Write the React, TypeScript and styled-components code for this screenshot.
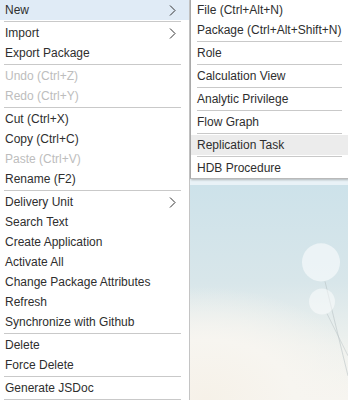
import React from 'react';
import styled, { createGlobalStyle } from 'styled-components';

const GlobalStyle = createGlobalStyle`
  html, body {
    margin: 0;
    padding: 0;
    width: 348px;
    height: 400px;
    overflow: hidden;
    background: #ffffff;
  }
  #root {
    height: 100%;
  }
`;

const Screen = styled.div`
    height: 400px;
    width: 348px;
    display: flex;
    font-family: "Liberation Sans", Arial, sans-serif;
    font-size: 12px;
    color: #2e2e2e;
    overflow: hidden;
`;

const Menu = styled.div`
    width: 189px;
    flex: none;
    background: #ffffff;
    border-right: 1px solid #c4c4c4;
    display: flex;
    flex-direction: column;
`;

const Item = styled.div<{ $disabled?: boolean; $active?: boolean; $hover?: boolean }>`
    height: 20px;
    line-height: 20px;
    padding: 0 5px;
    display: flex;
    align-items: center;
    justify-content: space-between;
    white-space: nowrap;
    color: ${p => (p.$disabled ? '#bdbdbd' : '#2e2e2e')};
    background: ${p => (p.$active ? '#e0ebf6' : p.$hover ? '#ececec' : 'transparent')};
`;

const Separator = styled.div<{ $left?: number; $right?: number }>`
    height: 1px;
    margin: 1px ${p => p.$right ?? 8}px 1px ${p => p.$left ?? 4}px;
    background: #c9c9c9;
    flex: none;
`;

const Arrow = styled.svg`
    width: 7px;
    height: 11px;
    margin-right: 8px;
    flex: none;
`;

const RightSide = styled.div`
    flex: 1;
    display: flex;
    flex-direction: column;
    min-width: 0;
`;

const SubMenu = styled.div`
    background: #ffffff;
    border-left: 1px solid #a9a9a9;
    border-bottom: 1px solid #b9b9b9;
    box-shadow: 1px 1px 2px rgba(0, 0, 0, 0.25);
    display: flex;
    flex-direction: column;
    position: relative;
    z-index: 1;
`;

const SubItem = styled(Item)`
    padding: 0 6px;
`;

const HeaderStrip = styled.div`
    height: 6px;
    background: #e9f2f7;
    flex: none;
`;

const Scene = styled.div`
    flex: 1;
    position: relative;
    background: radial-gradient(ellipse 140% 70% at 10% 100%, #f6f1e8 0%, #f7f5f0 40%, rgba(247, 245, 240, 0) 75%),
        linear-gradient(180deg, #cde2ea 0%, #d8e6ea 45%, #eef1ee 75%, #f7f5f0 100%);
    overflow: hidden;
`;

const SceneArt = styled.svg`
    width: 100%;
    height: 100%;
    display: block;
`;

type Entry = { label: string; disabled?: boolean; sub?: boolean; active?: boolean } | 'sep';

const mainItems: Entry[] = [
    { label: 'New', sub: true, active: true },
    'sep',
    { label: 'Import', sub: true },
    { label: 'Export Package' },
    'sep',
    { label: 'Undo (Ctrl+Z)', disabled: true },
    { label: 'Redo (Ctrl+Y)', disabled: true },
    'sep',
    { label: 'Cut (Ctrl+X)' },
    { label: 'Copy (Ctrl+C)' },
    { label: 'Paste (Ctrl+V)', disabled: true },
    { label: 'Rename (F2)' },
    'sep',
    { label: 'Delivery Unit', sub: true },
    { label: 'Search Text' },
    { label: 'Create Application' },
    { label: 'Activate All' },
    { label: 'Change Package Attributes' },
    { label: 'Refresh' },
    { label: 'Synchronize with Github' },
    'sep',
    { label: 'Delete' },
    { label: 'Force Delete' },
    'sep',
    { label: 'Generate JSDoc' },
    'sep',
];

const newItems: Entry[] = [
    { label: 'File (Ctrl+Alt+N)' },
    { label: 'Package (Ctrl+Alt+Shift+N)' },
    'sep',
    { label: 'Role' },
    'sep',
    { label: 'Calculation View' },
    'sep',
    { label: 'Analytic Privilege' },
    'sep',
    { label: 'Flow Graph' },
    'sep',
    { label: 'Replication Task', active: true },
    'sep',
    { label: 'HDB Procedure' },
];

const Chevron = () => (
    <Arrow viewBox="0 0 7 11">
        <path d="M1 0.5 L6 5.5 L1 10.5" fill="none" stroke="#333" strokeWidth="1" />
    </Arrow>
);

export default function App() {
    return <>
        <GlobalStyle/>
        <Screen>
            <Menu>
                {mainItems.map((e, i) => e === 'sep'
                    ? <Separator key={i}/>
                    : <Item key={i} $disabled={e.disabled} $active={e.active}>
                        <span>{e.label}</span>
                        {e.sub && <Chevron/>}
                    </Item>)}
            </Menu>
            <RightSide>
                <SubMenu>
                    {newItems.map((e, i) => e === 'sep'
                        ? <Separator key={i} $left={6} $right={6}/>
                        : <SubItem key={i} $hover={e.active}>
                            <span>{e.label}</span>
                        </SubItem>)}
                </SubMenu>
                <HeaderStrip/>
                <Scene>
                    <SceneArt viewBox="0 0 158 214" preserveAspectRatio="none">
                        <line x1="135" y1="96" x2="158" y2="190" stroke="#b8c2c4" strokeWidth="0.8" opacity="0.7"/>
                        <line x1="137" y1="128" x2="158" y2="170" stroke="#b8c2c4" strokeWidth="0.8" opacity="0.6"/>
                        <circle cx="131" cy="77" r="19" fill="#ffffff" opacity="0.55"/>
                        <circle cx="132" cy="116" r="13" fill="#ffffff" opacity="0.5"/>
                    </SceneArt>
                </Scene>
            </RightSide>
        </Screen>
    </>;
}
